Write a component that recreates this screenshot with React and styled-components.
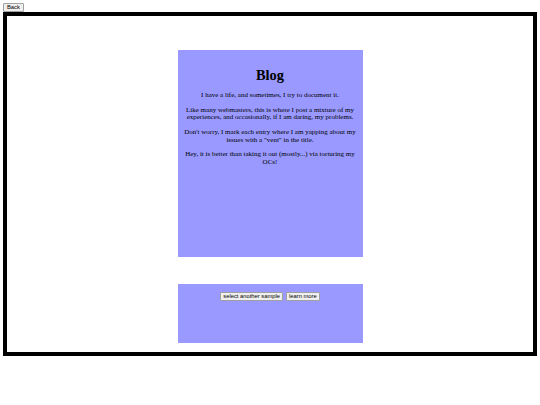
import React from 'react';
import styled, { createGlobalStyle } from 'styled-components';

const GlobalStyle = createGlobalStyle`
  html, body {
    margin: 0;
    padding: 0;
    background: #ffffff;
  }
  body {
    padding: 3px;
    font-family: "Liberation Serif", "Times New Roman", serif;
    color: #000;
  }
`;

const Toolbar = styled.div`
  display: flex;
  height: 9px;
`;

const Button = styled.button`
  font-family: "Liberation Sans", Arial, sans-serif;
  font-size: 5.8px;
  line-height: 7px;
  padding: 0 ${(p) => (p.$wide ? 3 : 2)}px;
  height: 9px;
  margin: 0;
  background: #efefef;
  color: #000;
  border: 1px solid #a0a0a0;
  border-radius: 1px;
  cursor: pointer;
`;

const Frame = styled.div`
  box-sizing: border-box;
  width: 534px;
  height: 344px;
  border: 4px solid #000;
  display: flex;
  flex-direction: column;
  align-items: center;
  padding-top: 34px;
  gap: 27px;
`;

const Panel = styled.div`
  box-sizing: border-box;
  width: 185px;
  height: ${(p) => p.$height}px;
  background: #9999ff;
  padding: 4px 4px;
  text-align: center;
`;

const Title = styled.h1`
  font-size: 14.4px;
  line-height: 16.5px;
  font-weight: bold;
  margin: 13px 0 8.5px;
`;

const Para = styled.p`
  font-size: 7px;
  line-height: 7.8px;
  margin: 0 0 6.8px;
`;

const ButtonRow = styled.div`
  display: flex;
  justify-content: center;
  gap: 3px;
  padding-top: 4px;
`;

export default function App() {
  return (
    <>
      <GlobalStyle />
      <Toolbar>
        <Button type="button" $wide>Back</Button>
      </Toolbar>
      <Frame>
        <Panel $height={207}>
          <Title>Blog</Title>
          <Para>I have a life, and sometimes, I try to document it.</Para>
          <Para>
            Like many webmasters, this is where I post a mixture of my experiences, and
            occasionally, if I am daring, my problems.
          </Para>
          <Para>
            Don't worry, I mark each entry where I am yapping about my issues with a "vent" in
            the title.
          </Para>
          <Para>Hey, it is better than taking it out (mostly...) via torturing my OCs!</Para>
        </Panel>
        <Panel $height={59}>
          <ButtonRow>
            <Button type="button">select another sample</Button>
            <Button type="button">learn more</Button>
          </ButtonRow>
        </Panel>
      </Frame>
    </>
  );
}
